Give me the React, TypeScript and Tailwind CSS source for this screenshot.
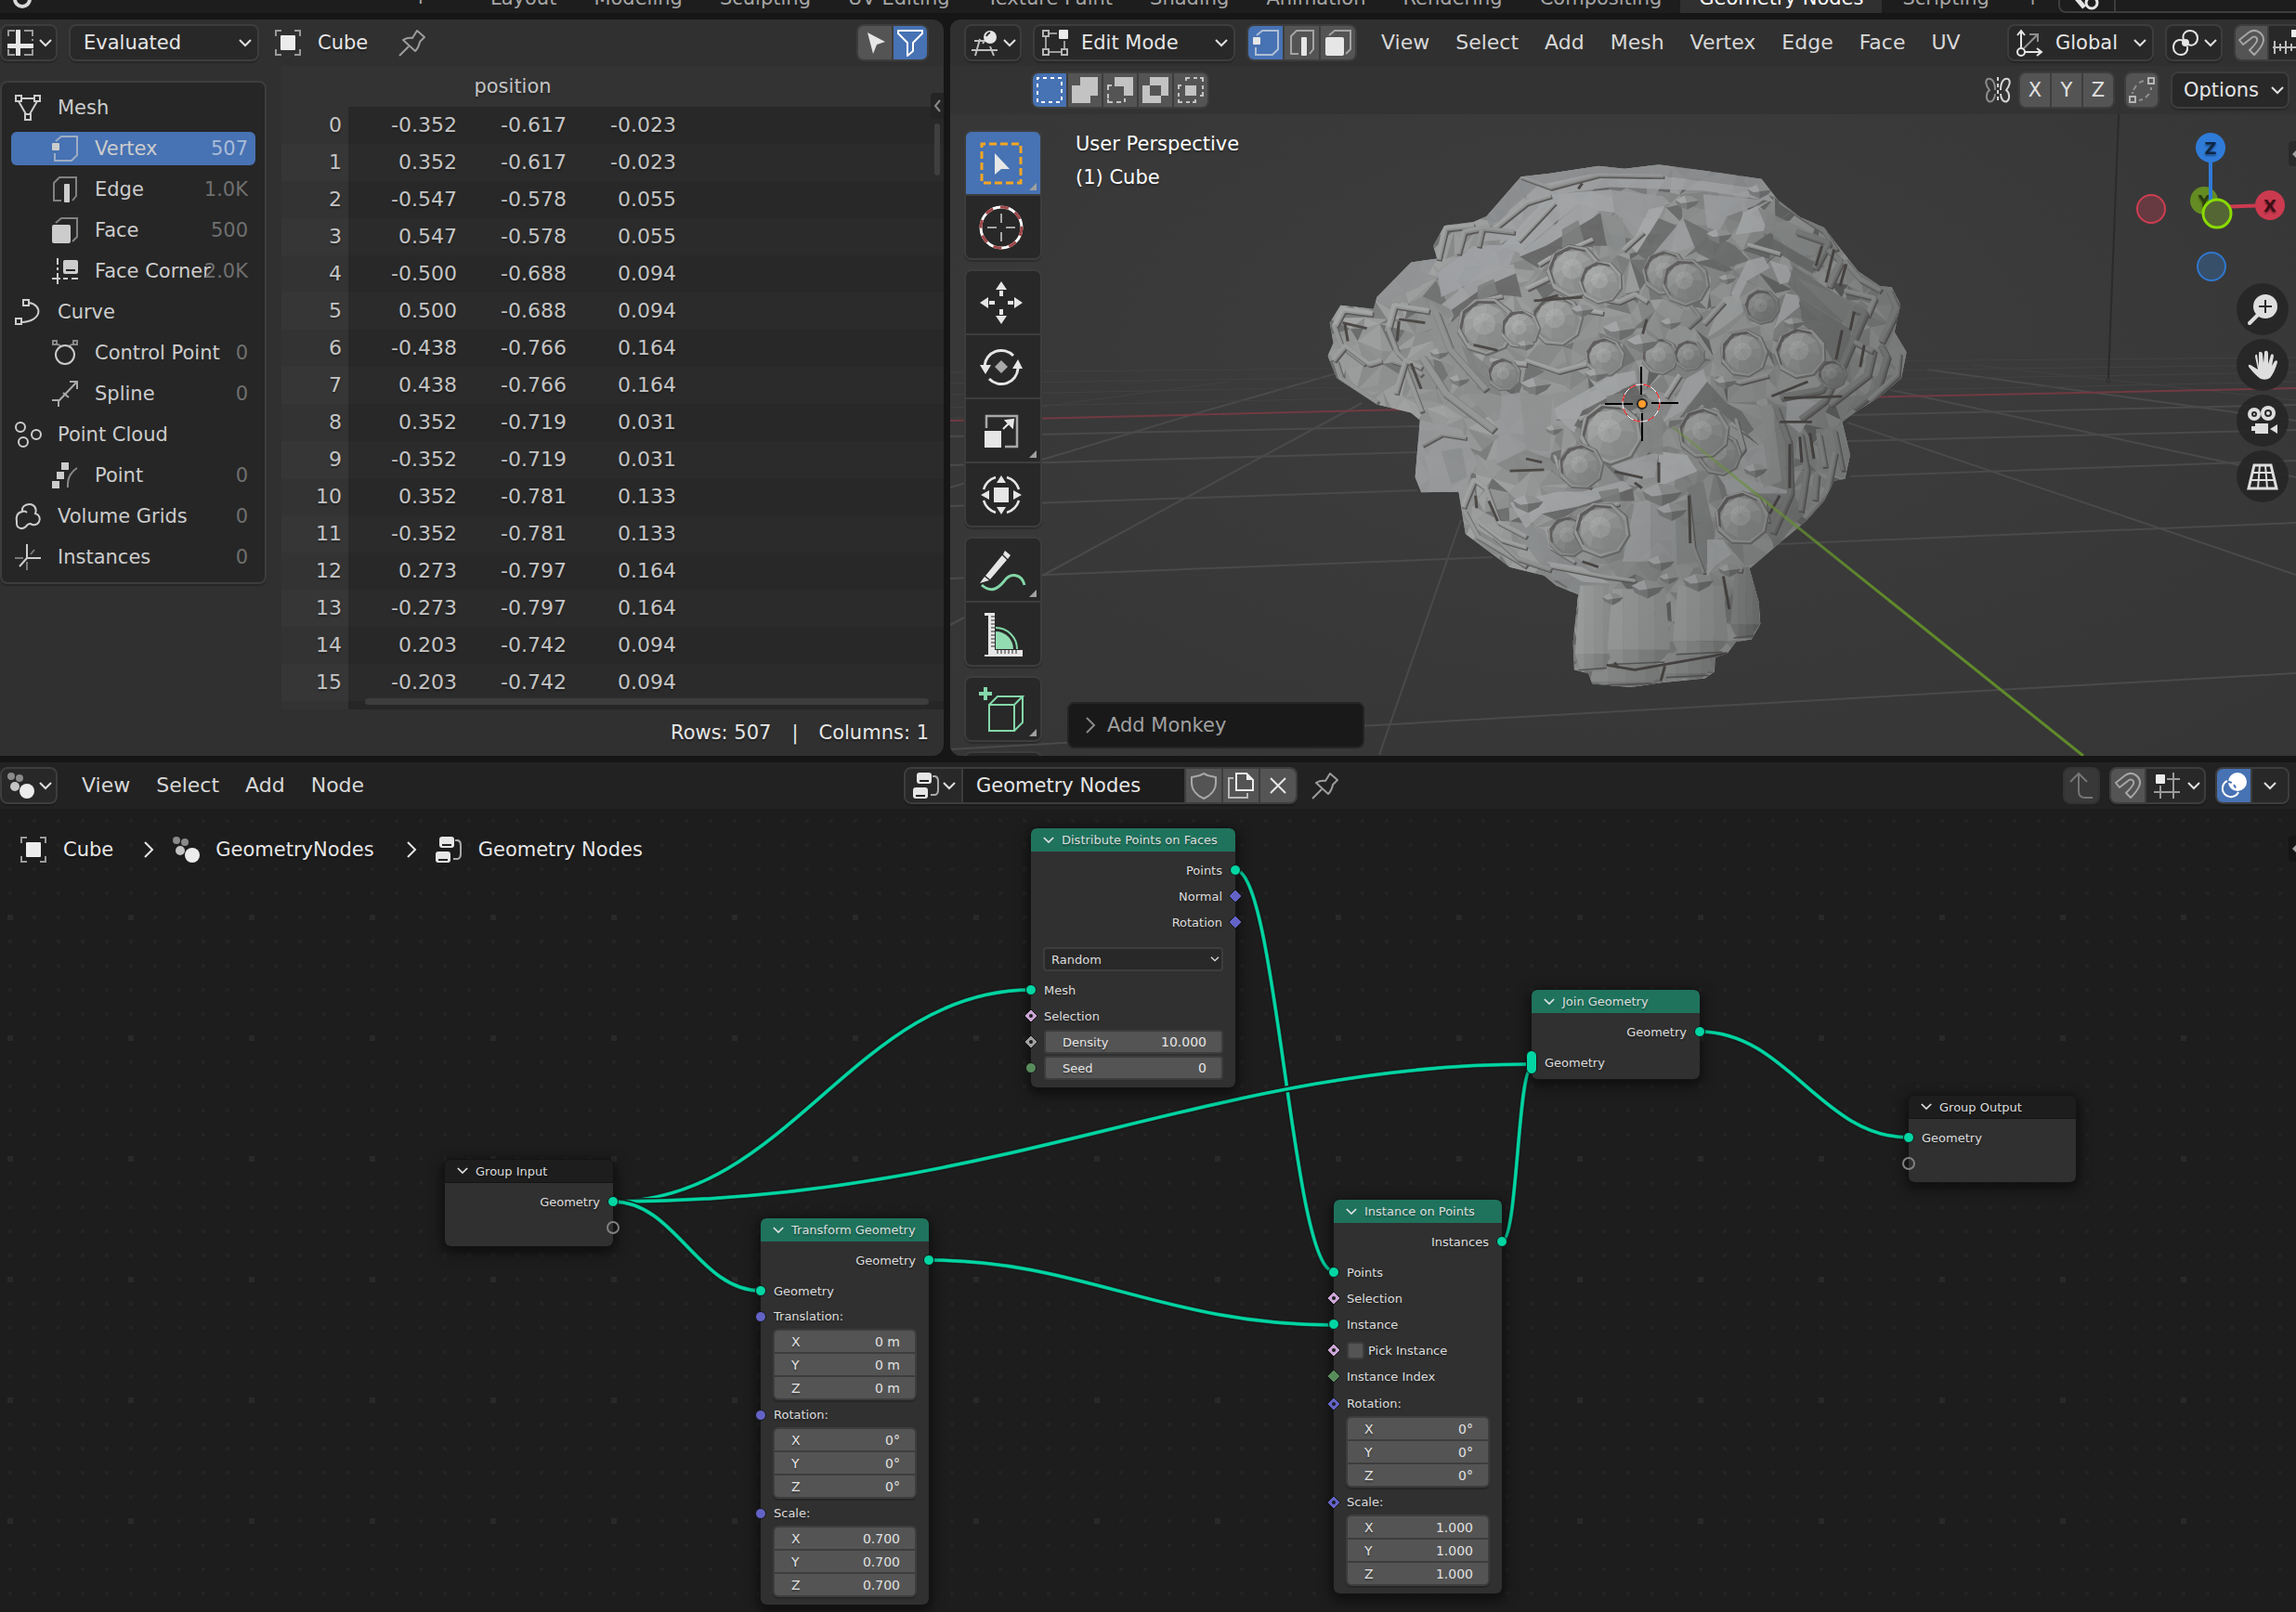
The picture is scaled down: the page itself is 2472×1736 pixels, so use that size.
import type { ReactNode } from "react";

/* ------------------------------------------------------------------ */
/* Icons                                                               */
/* ------------------------------------------------------------------ */

const iconShapes: Record<string, ReactNode> = {
  spreadsheet: (
    <>
      <path d="M1 7V1H8M20 1H27V7M1 21V27H8M20 27H27V21" fill="none" stroke="#9a9a9a" strokeWidth="2" />
      <path d="M9 0H14V15H28V20H14V28H9V20H0V15H9Z" fill="#e6e6e6" />
      <path d="M18 1H22M18 27H22M27 10V12" stroke="#9a9a9a" strokeWidth="2" />
    </>
  ),
  object: (
    <>
      <path d="M1 7V1H7M21 1H27V7M1 21V27H7M21 27H27V21" fill="none" stroke="#9a9a9a" strokeWidth="2" />
      <rect x="6" y="6" width="16" height="16" rx="1" fill="#ececec" />
    </>
  ),
  pin: (
    <path
      d="M0 28L10 18M19 1L27 8L22 13Q21 19 17 23L4 11Q9 8 14 9Z"
      fill="none"
      stroke="#9c9c9c"
      strokeWidth="2"
      strokeLinejoin="round"
    />
  ),
  cursor: <path d="M6 3L25 13L16 16L12 26Z" fill="#e6e6e6" />,
  filter: <path d="M1 1H27V4L17 14V23L11 28V14L1 4Z" fill="none" stroke="#fff" strokeWidth="2" strokeLinejoin="round" />,
  vertex: (
    <>
      <path d="M4 6L10 1H27V21L21 27H3V19" fill="none" stroke="currentColor" strokeOpacity=".65" strokeWidth="2" />
      <rect x="0" y="8" width="8" height="8" rx="1" fill="currentColor" />
    </>
  ),
  edge: (
    <>
      <path d="M10 26H2V7L8 1H26V21L22 26" fill="none" stroke="currentColor" strokeOpacity=".55" strokeWidth="2" />
      <rect x="13" y="8" width="6" height="20" rx="1" fill="currentColor" />
    </>
  ),
  face: (
    <>
      <path d="M4 6L10 1H27V21L22 26" fill="none" stroke="currentColor" strokeOpacity=".55" strokeWidth="2" />
      <rect x="0" y="8" width="20" height="20" rx="2" fill="currentColor" />
    </>
  ),
  corner: (
    <>
      <path d="M6 0V7M6 10V13M6 16V28M0 22H9M12 22H17M21 22H28" stroke="currentColor" strokeWidth="2" />
      <rect x="12" y="2" width="16" height="15" rx="2" fill="currentColor" />
      <path d="M15 13H25" stroke="#262626" strokeWidth="2" />
    </>
  ),
  mesh: (
    <g fill="none" stroke="currentColor" strokeWidth="2">
      <path d="M7 4H21M4 7L12 21M24 7L16 21" />
      <path d="M1 1H7V7H1ZM21 1H27V7H21ZM11 21H17V27H11Z" />
    </g>
  ),
  curve: (
    <g fill="none" stroke="currentColor" strokeWidth="2">
      <path d="M9 1H15V7H9ZM1 21H7V27H1Z" />
      <path d="M15 4C30 6 30 24 7 25" />
    </g>
  ),
  controlPoint: (
    <g fill="none" stroke="currentColor" strokeWidth="2">
      <circle cx="14" cy="16" r="10" />
      <path d="M1 1H5V5H1ZM23 1H27V5H23ZM5 4L10 7M23 4L18 7" strokeOpacity=".6" />
    </g>
  ),
  spline: (
    <g fill="none" stroke="currentColor" strokeWidth="2">
      <path d="M7 22L27 1M19 1H27V9M12 13L18 18M0 21H7V28" strokeOpacity=".8" />
    </g>
  ),
  pointCloud: (
    <g fill="none" stroke="currentColor" strokeWidth="2">
      <circle cx="6" cy="6" r="5" />
      <circle cx="23" cy="14" r="5" />
      <circle cx="9" cy="22" r="5" />
    </g>
  ),
  point: (
    <>
      <path d="M10 0H18V8H10ZM5 10H13V18H5ZM0 20H8V28H0Z" fill="currentColor" />
      <path d="M27 6Q16 13 17 27" fill="none" stroke="currentColor" strokeOpacity=".6" strokeWidth="2" />
    </>
  ),
  volume: (
    <path
      d="M8 9C7 3 12 1 16 1C21 1 24 6 22 11C26 12 28 16 26 20C24 24 19 24 17 22C14 22 13 23 12 25C8 29 1 27 2 20C1 15 2 10 8 9ZM8 9C10 8 12 9 13 10"
      fill="none"
      stroke="currentColor"
      strokeWidth="2"
    />
  ),
  instances: (
    <g stroke="currentColor" strokeWidth="2">
      <path d="M13 0V15H28M13 15L5 24" fill="none" />
      <path d="M13 19V28M9 15H0M17 11L21 6" strokeOpacity=".5" />
    </g>
  ),
  viewport: (
    <>
      <path d="M9 10L4 28M0 22H28M3 12H17M20 18L24 28M14 12L12 15" fill="none" stroke="#bdbdbd" strokeWidth="2" />
      <circle cx="20" cy="8" r="7" fill="#e6e6e6" />
      <path d="M16 7Q17 4 20 3" stroke="#2a2a2a" strokeWidth="2" fill="none" />
    </>
  ),
  editMode: (
    <>
      <path d="M8 4H16M4 8V20M8 24H20M24 12V20" stroke="#9a9a9a" strokeWidth="2" />
      <path d="M1 1H7V7H1ZM1 21H7V27H1ZM21 21H27V27H21Z" fill="none" stroke="#b5b5b5" strokeWidth="2" />
      <rect x="18" y="0" width="10" height="10" rx="1" fill="#ececec" />
    </>
  ),
  selectNew: <rect x="1" y="1" width="26" height="26" fill="none" stroke="#fff" strokeWidth="2" strokeDasharray="4 4" strokeDashoffset="2" />,
  selectExtend: <path d="M9 0H28V20H20V28H0V9H9Z" fill="#c3c3c3" />,
  selectSubtract: (
    <>
      <path d="M8 0H28V20H18V10H8Z" fill="#c3c3c3" />
      <path d="M5 9H1V14M1 18V23M1 24V27H6M10 27H15M19 27V23" fill="none" stroke="#c3c3c3" strokeWidth="2" />
    </>
  ),
  selectInvert: <path d="M8 0H28V20H20V28H0V9H8ZM8 9V20H20V9Z" fill="#c3c3c3" fillRule="evenodd" />,
  selectIntersect: (
    <>
      <rect x="8" y="9" width="12" height="11" fill="#c3c3c3" />
      <path d="M9 4V1H13M17 1H21M24 1H27V5M27 9V13M27 16V20H24M4 9H1V13M1 17V21M1 24V27H5M9 27H13M16 27H19V24" fill="none" stroke="#c3c3c3" strokeWidth="2" />
    </>
  ),
  orientation: (
    <>
      <path d="M5 24V2M1 6L5 1L9 6M5 24H26M22 20L27 24L22 28" fill="none" stroke="#e6e6e6" strokeWidth="2" />
      <path d="M8 20L22 6M14 5H23V13" fill="none" stroke="#8e8e8e" strokeWidth="2" />
      <circle cx="5" cy="24" r="4" fill="#282828" stroke="#e6e6e6" strokeWidth="2" />
    </>
  ),
  pivot: (
    <g fill="none" stroke="#e6e6e6" strokeWidth="2">
      <path d="M12 12C6 9 1 13 1 19C1 24 5 27 9 27C14 27 17 23 16 18" />
      <path d="M12 11C10 5 14 1 19 1C24 1 27 5 27 9C27 15 22 18 17 16" />
      <circle cx="14" cy="14" r="3" fill="#e6e6e6" />
    </g>
  ),
  magnet: (
    <path
      d="M1 11L11 3C20 -3 30 6 26 15C24 20 20 24 17 27L12 22C16 18 19 15 20 12C21 8 17 6 14 9L5 16Z"
      fill="none"
      stroke="#a5a5a5"
      strokeWidth="2"
      strokeLinejoin="round"
    />
  ),
  increment: (
    <>
      <path d="M0 19H28M2 12V26M8 15V23M14 12V26M20 15V23M26 12V26" stroke="#bdbdbd" strokeWidth="2" />
      <rect x="20" y="0" width="8" height="8" fill="#ececec" />
    </>
  ),
  mirror: (
    <g fill="none" strokeWidth="2">
      <path d="M11 14C11 4 7 1 3 2C0 4 1 9 5 14C1 17 1 24 4 26C8 28 11 23 11 18" stroke="#8a8a8a" />
      <path d="M17 14C17 4 21 1 25 2C28 4 27 9 23 14C27 17 27 24 24 26C20 28 17 23 17 18" stroke="#d5d5d5" />
      <path d="M14 0V28" stroke="#d5d5d5" strokeDasharray="4 3" />
    </g>
  ),
  proportional: (
    <g fill="none" stroke="#b5b5b5" strokeWidth="2">
      <path d="M21 1H27V7H21ZM1 21H7V27H1Z" />
      <path d="M16 4L11 6M8 9L5 14M4 16V18M24 11V14M22 18L18 22M15 24L11 25" strokeOpacity=".6" />
    </g>
  ),
  geoNodes: (
    <>
      <circle cx="4" cy="4" r="4" fill="#8a8a8a" />
      <circle cx="13" cy="6" r="4" fill="#8a8a8a" />
      <circle cx="8" cy="15" r="5" fill="#c4c4c4" />
      <circle cx="21" cy="20" r="8" fill="#ececec" />
    </>
  ),
  nodeTree: (
    <>
      <path d="M21 4H24Q27 5 27 9V19Q27 23 24 24H19" fill="none" stroke="#a8a8a8" strokeWidth="2" />
      <rect x="4" y="0" width="16" height="12" rx="3" fill="#e6e6e6" />
      <rect x="0" y="16" width="16" height="12" rx="3" fill="#e6e6e6" />
      <path d="M7 9H17M3 25H13" stroke="#222" strokeWidth="2" />
    </>
  ),
  shield: <path d="M14 1L18 3L27 5V11C27 19 21 25 14 28C7 25 1 19 1 11V5L10 3Z" fill="none" stroke="#a8a8a8" strokeWidth="2" />,
  duplicate: (
    <>
      <path d="M6 6H1V27H21V22" fill="none" stroke="#b9b9b9" strokeWidth="2" />
      <path d="M9 1H20L27 8V19H9Z" fill="none" stroke="#ececec" strokeWidth="2" />
      <path d="M20 0L28 8H20Z" fill="#ececec" />
    </>
  ),
  close: <path d="M6 6L22 22M22 6L6 22" stroke="#e6e6e6" strokeWidth="2" />,
  up: <path d="M2 10L11 1L20 10M11 2V20Q11 27 18 27H26" fill="none" stroke="#757575" strokeWidth="2" />,
  snapGrid: (
    <>
      <path d="M14 7H28M21 0V28M0 21H28M7 14V28" stroke="#9a9a9a" strokeWidth="2" />
      <rect x="2" y="2" width="10" height="10" rx="1" fill="#ececec" />
    </>
  ),
  overlay: (
    <>
      <circle cx="18" cy="10" r="10" fill="#fff" />
      <path d="M7 9A9 9 0 1 0 19 21" fill="none" stroke="#fff" strokeWidth="2" />
      <path d="M8 10Q14 10 17 19" fill="none" stroke="#4772b3" strokeWidth="2" strokeDasharray="4 3" />
    </>
  ),
};

function Icon({ name, className = "" }: { name: string; className?: string }) {
  return (
    <svg viewBox="0 0 28 28" aria-hidden="true" className={`h-7 w-7 shrink-0 overflow-visible ${className}`}>
      {iconShapes[name]}
    </svg>
  );
}

function Chevron({ className = "h-[9px] w-[14px]" }: { className?: string }) {
  return (
    <svg viewBox="0 0 14 9" aria-hidden="true" className={`shrink-0 ${className}`}>
      <path d="M1 1L7 7L13 1" fill="none" stroke="#e0e0e0" strokeWidth="2" />
    </svg>
  );
}

/* ------------------------------------------------------------------ */
/* Controls                                                            */
/* ------------------------------------------------------------------ */

const box = "rounded-lg border-2 border-[#3d3d3d] bg-[#282828] shadow-[0_2px_1px_rgba(0,0,0,0.2)]";

function IconMenu({ icon, label }: { icon: string; label: string }) {
  return (
    <button aria-label={label} className={`flex h-10 w-[62px] shrink-0 items-center justify-between pr-1 pl-1.5 ${box}`}>
      <Icon name={icon} />
      <Chevron />
    </button>
  );
}

function Dropdown({ label, value, icon, className }: { label: string; value: string; icon?: string; className: string }) {
  return (
    <label className={`flex h-10 shrink-0 items-center gap-3.5 pr-1.5 ${icon ? "pl-2" : "pl-3.5"} ${box} ${className}`}>
      <span className="sr-only">{label}</span>
      {icon && <Icon name={icon} />}
      <select className="min-w-0 flex-1 appearance-none bg-transparent text-[#e6e6e6] outline-none">
        <option>{value}</option>
      </select>
      <Chevron />
    </label>
  );
}

function ToggleGroup({ items, active, label, cell }: { items: string[]; active: string; label: string; cell: string }) {
  return (
    <div role="group" aria-label={label} className="flex h-10 shrink-0 gap-0.5 overflow-hidden rounded-lg border-2 border-[#3d3d3d] bg-[#3d3d3d]">
      {items.map((n) => (
        <button
          key={n}
          aria-label={n}
          aria-pressed={n === active}
          className={`grid place-items-center text-[#e6e6e6] ${cell} ${n === active ? "bg-[#4772b3]" : "bg-[#545454]"}`}
        >
          <Icon name={n} />
        </button>
      ))}
    </div>
  );
}

function MenuItems({ items }: { items: string[] }) {
  return (
    <nav className="flex text-[22px] text-[#d8d8d8]">
      {items.map((m) => (
        <button key={m} className="px-3.5">
          {m}
        </button>
      ))}
    </nav>
  );
}

/* ------------------------------------------------------------------ */
/* Top bar                                                             */
/* ------------------------------------------------------------------ */

const workspacesBefore = ["Layout", "Modeling", "Sculpting", "UV Editing", "Texture Paint", "Shading", "Animation", "Rendering", "Compositing"];

function TopBar() {
  return (
    <header className="overflow-hidden bg-[#1d1d1d]">
      <div className="-mt-[18px] flex h-8 items-center text-[#a5a5a5]">
        <svg viewBox="0 0 28 28" aria-hidden="true" className="ml-2.5 h-7 w-7 shrink-0">
          <circle cx="14" cy="15" r="8" fill="none" stroke="#d8d8d8" strokeWidth="4" />
        </svg>
        <nav className="mb-2.5 ml-6 flex w-[446px] shrink-0 gap-[30px]">
          {["File", "Edit", "Render", "Window", "Help"].map((m) => (
            <button key={m}>{m}</button>
          ))}
        </nav>
        <nav className="flex shrink-0 items-center">
          {workspacesBefore.map((w) => (
            <button key={w} className="px-5">
              {w}
            </button>
          ))}
          <button className="h-8 bg-[#303030] px-5 text-white">Geometry Nodes</button>
          <button className="px-[22px]">Scripting</button>
          <button aria-label="Add workspace" className="px-4">
            +
          </button>
        </nav>
        <div className="ml-auto flex h-8 w-[256px] shrink-0 rounded-bl-lg border-b-2 border-l-2 border-[#3d3d3d] bg-[#1d1d1d]">
          <div className="flex w-[60px] items-end justify-center border-r-2 border-[#3d3d3d]">
            <svg viewBox="0 0 30 24" aria-hidden="true" className="h-6 w-[30px]">
              <path d="M2 8L12 20" stroke="#e6e6e6" strokeWidth="5" />
              <circle cx="20" cy="15" r="6" fill="none" stroke="#e6e6e6" strokeWidth="3" />
            </svg>
          </div>
        </div>
      </div>
    </header>
  );
}

/* ------------------------------------------------------------------ */
/* Spreadsheet                                                         */
/* ------------------------------------------------------------------ */

const domains: { icon: string; label: string; count?: string; child?: boolean; active?: boolean }[] = [
  { icon: "mesh", label: "Mesh" },
  { icon: "vertex", label: "Vertex", count: "507", child: true, active: true },
  { icon: "edge", label: "Edge", count: "1.0K", child: true },
  { icon: "face", label: "Face", count: "500", child: true },
  { icon: "corner", label: "Face Corner", count: "2.0K", child: true },
  { icon: "curve", label: "Curve" },
  { icon: "controlPoint", label: "Control Point", count: "0", child: true },
  { icon: "spline", label: "Spline", count: "0", child: true },
  { icon: "pointCloud", label: "Point Cloud" },
  { icon: "point", label: "Point", count: "0", child: true },
  { icon: "volume", label: "Volume Grids", count: "0" },
  { icon: "instances", label: "Instances", count: "0" },
];

const positions = [
  ["-0.352", "-0.617", "-0.023"],
  ["0.352", "-0.617", "-0.023"],
  ["-0.547", "-0.578", "0.055"],
  ["0.547", "-0.578", "0.055"],
  ["-0.500", "-0.688", "0.094"],
  ["0.500", "-0.688", "0.094"],
  ["-0.438", "-0.766", "0.164"],
  ["0.438", "-0.766", "0.164"],
  ["0.352", "-0.719", "0.031"],
  ["-0.352", "-0.719", "0.031"],
  ["0.352", "-0.781", "0.133"],
  ["-0.352", "-0.781", "0.133"],
  ["0.273", "-0.797", "0.164"],
  ["-0.273", "-0.797", "0.164"],
  ["0.203", "-0.742", "0.094"],
  ["-0.203", "-0.742", "0.094"],
];

function Spreadsheet() {
  return (
    <section className="flex min-h-0 min-w-0 flex-col overflow-hidden rounded-r-xl bg-[#303030]">
      <div className="flex h-[50px] shrink-0 items-center pr-4">
        <IconMenu icon="spreadsheet" label="Editor type" />
        <Dropdown label="Object evaluation state" value="Evaluated" className="ml-3 w-[205px]" />
        <Icon name="object" className="ml-[17px]" />
        <span className="ml-[18px] text-[#e6e6e6]">Cube</span>
        <button aria-label="Pin" className="ml-[34px]">
          <Icon name="pin" />
        </button>
        <div className="ml-auto">
          <ToggleGroup items={["cursor", "filter"]} active="filter" label="Row filters" cell="w-9" />
        </div>
      </div>
      <div className="flex min-h-0 flex-1">
        <div className="flex w-[303px] shrink-0 flex-col pt-4 pr-4">
          <ul className="rounded-lg border-2 border-[#3d3d3d] bg-[#262626] py-[5px] shadow-[0_2px_1px_rgba(0,0,0,0.2)]">
            {domains.map((d) => (
              <li key={d.label} className="px-[10px] py-1">
                <button
                  className={`flex h-9 w-full items-center rounded-md pr-2 text-left text-[#cccccc] ${d.child ? "pl-11" : "pl-1"} ${d.active ? "bg-[#4772b3]" : ""}`}
                >
                  <Icon name={d.icon} />
                  <span className="w-0 flex-1 pl-[18px] whitespace-nowrap">{d.label}</span>
                  <span className={d.active ? "text-[#a9bbd8]" : "text-[#6f6f6f]"}>{d.count}</span>
                </button>
              </li>
            ))}
          </ul>
        </div>
        <div className="relative min-w-0 flex-1 overflow-hidden">
          <table className="w-full table-fixed border-collapse text-[22px] text-[#c4c4c4]">
            <colgroup>
              <col className="w-[72px]" />
              <col className="w-[118px]" />
              <col className="w-[118px]" />
              <col className="w-[118px]" />
              <col />
            </colgroup>
            <thead>
              <tr className="h-11 bg-[#333333] text-[21px]">
                <th />
                <th colSpan={3} className="p-0 font-normal">
                  position
                </th>
                <th />
              </tr>
            </thead>
            <tbody>
              {positions.map((p, i) => (
                <tr key={i} className="h-10 bg-[#282828] even:bg-[#2b2b2b]">
                  <th scope="row" className={`p-0 pr-[7px] text-right font-normal ${i % 2 ? "bg-[#363636]" : "bg-[#333333]"}`}>
                    {i}
                  </th>
                  {p.map((v, j) => (
                    <td key={j} className="p-0 pr-px text-right">
                      {v}
                    </td>
                  ))}
                  <td />
                </tr>
              ))}
              <tr className="h-10 bg-[#262626]">
                <th className="bg-[#333333]" />
                <td colSpan={4} />
              </tr>
            </tbody>
          </table>
          <div className="absolute right-4 bottom-[5px] left-[90px] h-[7px] rounded-full bg-[#3d3d3d]" />
          <div className="absolute top-[62px] right-1 h-14 w-1.5 rounded-full bg-[#3f3f3f]" />
          <button aria-label="Show sidebar" className="absolute top-[29px] right-0 grid h-7 w-3.5 place-items-center rounded-l bg-[#242424]">
            <svg viewBox="0 0 8 14" aria-hidden="true" className="h-3.5 w-2">
              <path d="M7 1L2 7L7 13" fill="none" stroke="#8a8a8a" strokeWidth="2" />
            </svg>
          </button>
        </div>
      </div>
      <div className="flex h-[50px] shrink-0 items-center justify-end gap-[22px] pr-4 text-[#e6e6e6]">
        <span>Rows: 507</span>
        <span>|</span>
        <span>Columns: 1</span>
      </div>
    </section>
  );
}

/* ------------------------------------------------------------------ */
/* 3D viewport                                                         */
/* ------------------------------------------------------------------ */

const silhouette =
  "462,210 548,102 620,93 740,73 805,80 890,69 1015,87 1145,108 1185,165 1240,212 1300,240 1335,290 1385,360 1440,400 1468,403 1490,450 1475,525 1505,580 1492,650 1440,700 1375,745 1345,770 1365,860 1352,925 1325,930 1300,985 1255,1040 1200,1090 1115,1170 1138,1260 1142,1320 1120,1362 1082,1368 1060,1400 1030,1412 1028,1450 1005,1468 895,1480 820,1492 725,1483 715,1455 680,1445 677,1370 690,1240 635,1215 605,1188 520,1165 410,1075 393,960 300,962 285,920 297,765 275,745 190,722 90,650 68,590 82,555 73,500 100,452 182,462 190,430 275,335 340,325 330,290 358,235 430,225";

function noise(n: number) {
  const v = Math.sin(n * 127.1 + 31.7) * 43758.5453;
  return v - Math.floor(v);
}

function grey(v: number) {
  const c = Math.max(60, Math.min(176, Math.round(v)));
  return `rgb(${c},${c + 1},${c + 1})`;
}

type Facet = { points: string; fill: string };

function surfaceFacets(): Facet[] {
  const out: Facet[] = [];
  const sx = 40;
  const sy = 44;
  const at = (i: number, j: number): [number, number] => [
    i * sx + (noise(i * 7.3 + j * 19.1) - 0.5) * 50,
    j * sy + (noise(i * 13.7 + j * 5.9) - 0.5) * 50,
  ];
  for (let j = 0; j < 36; j++) {
    for (let i = 0; i < 40; i++) {
      const a = at(i, j);
      const b = at(i + 1, j);
      const c = at(i + 1, j + 1);
      const d = at(i, j + 1);
      const lit = 152 - (i / 40) * 20;
      const k = i * 41 + j * 77;
      const tris: [number, number][][] = (i + j) % 2 ? [[a, b, c], [a, c, d]] : [[a, b, d], [b, c, d]];
      tris.forEach((t, n) => {
        const shade = lit + (noise(k + n * 3.3) - 0.5) * 26 - (noise(k * 1.7 + n) > 0.88 ? 32 : 0);
        out.push({ points: t.map((p) => p.join(",")).join(" "), fill: grey(shade) });
      });
    }
  }
  return out;
}

const facets = surfaceFacets();

/* A faceted eyeball sunk in its socket. */
function Gem({ x, y, r, tone = 158 }: { x: number; y: number; r: number; tone?: number }) {
  const n = 9;
  const ring = (rad: number, off: number, dx = 0, dy = 0) =>
    Array.from({ length: n }, (_, i) => {
      const a = ((i + off) / n) * Math.PI * 2 + x;
      return [Math.round(x + dx + Math.cos(a) * rad), Math.round(y + dy + Math.sin(a) * rad * 1.08)] as [number, number];
    });
  const outer = ring(r, 0);
  const inner = ring(r * 0.52, 0.1, -r * 0.06, -r * 0.1);
  const cx = x - r * 0.1;
  const cy = y - r * 0.18;
  return (
    <g>
      <polygon points={ring(r * 1.34, 0.3, 2, 2).join(" ")} fill="#6b6b6a" />
      <polygon points={ring(r * 1.28, 0.3).join(" ")} fill={grey(tone - 6)} />
      <polygon points={ring(r * 1.12, 0.4, -3, -4).join(" ")} fill="#5f5e5d" />
      <polygon points={ring(r * 1.12, 0.4, 3, 3).join(" ")} fill={grey(tone - 22)} />
      {outer.map((p, i) => {
        const q = outer[(i + 1) % n];
        const s = inner[i];
        const t = inner[(i + 1) % n];
        const a = ((i + 0.5) / n) * Math.PI * 2 + x;
        const l = -Math.cos(a - 0.9) * 13;
        return (
          <g key={i}>
            <polygon points={`${p} ${q} ${t} ${s}`} fill={grey(tone - 8 + l)} />
            <polygon points={`${s} ${t} ${cx},${cy}`} fill={grey(tone + 4 + l * 0.6)} />
          </g>
        );
      })}
    </g>
  );
}

const gems: [number, number, number, number][] = [
  [1145, 455, 34, 138], [905, 362, 44, 148], [955, 388, 46, 146], [678, 358, 52, 160], [745, 388, 42, 162],
  [635, 492, 50, 158], [460, 508, 56, 158], [545, 516, 38, 160], [505, 640, 32, 148], [755, 592, 38, 154],
  [892, 590, 36, 150], [965, 588, 30, 144], [1320, 640, 28, 136], [1100, 582, 46, 154], [1240, 580, 50, 156],
  [770, 800, 60, 160], [1040, 856, 42, 148], [1000, 798, 50, 152], [695, 890, 44, 152], [665, 1080, 40, 146],
  [747, 1062, 54, 158], [1095, 1030, 52, 156],
];

/* Broad planes of the crown, brows, cheeks and chins: [points, fill]. */
const planes: [string, string][] = [
  ["548,102 740,73 890,69 1145,108 1150,135 900,100 720,95 590,125 470,240 462,210", "#8b8d8f"],
  ["590,125 720,95 900,100 1150,135 1175,170 1000,140 770,130 630,150 530,270 440,280", "#9fa1a3"],
  ["620,150 770,137 780,145 780,200 740,195 690,180 640,220 545,310 500,290", "#a3a5a7"],
  ["770,137 900,155 920,175 865,190 830,270 790,210 780,200", "#96989a"],
  ["1000,150 1150,165 1130,180 1060,210 1040,250 1010,240", "#9a9c9e"],
  ["190,430 275,335 340,325 300,400 200,450", "#919395"],
  ["340,365 430,290 540,285 520,340 350,430", "#9fa2a5"],
  ["545,310 690,180 740,195 725,215 610,290 545,320", "#a2a4a6"],
  ["545,320 610,290 725,215 745,200 780,290 700,290 640,300 590,350", "#646464"],
  ["650,245 690,220 705,280 650,300", "#7e7f7f"],
  ["745,200 800,215 810,300 770,330 755,260", "#8c8e8e"],
  ["350,450 470,345 530,340 535,365 460,400 375,465", "#a0a2a3"],
  ["375,465 460,400 535,365 550,430 510,425 430,440 385,490", "#666666"],
  ["440,400 480,380 490,420 440,440", "#7d7e7e"],
  ["820,290 865,190 905,180 890,215 835,310", "#a7a9aa"],
  ["835,310 890,215 935,235 920,300 860,330", "#6a6b6b"],
  ["870,320 935,235 950,210 990,280 960,300", "#9b9d9e"],
  ["950,215 1080,290 1115,330 1060,350 985,310", "#6b6c6c"],
  ["1080,260 1100,200 1135,180 1160,200 1150,250", "#a5a7a8"],
  ["1135,185 1310,275 1250,320 1160,250", "#858787"],
  ["1150,255 1260,325 1300,345 1270,365 1170,300", "#686969"],
  ["1070,420 1110,330 1150,320 1165,350 1110,385 1080,450", "#a3a5a6"],
  ["1165,330 1210,345 1225,385 1190,395", "#a5a7a8"],
  ["1225,345 1370,450 1345,500 1240,430 1210,395", "#717272"],
  ["1230,375 1400,455 1385,545 1350,500", "#7d7f7f"],
  ["1010,540 1050,430 1090,425 1100,470 1040,520", "#9ea0a1"],
  ["1175,520 1205,420 1235,425 1240,455 1190,500", "#a5a7a8"],
  ["1240,430 1370,520 1340,640 1300,560 1245,500", "#6d6e6e"],
  ["320,440 400,520 440,640 560,720 480,770 370,650 330,560", "#8e9090"],
  ["400,560 470,620 500,700 440,680", "#7f8181"],
  ["620,740 780,640 830,630 835,660 700,740 680,800", "#a2a4a5"],
  ["680,780 700,740 830,665 860,720 820,740 740,740 700,790", "#666666"],
  ["760,700 800,690 805,735 765,745", "#7e7f7f"],
  ["900,770 960,650 1000,625 1010,660 950,740", "#a2a4a5"],
  ["940,760 1010,660 1060,720 1150,770 1110,805 1030,730", "#6b6c6c"],
  ["500,700 540,690 625,700 640,780 620,870 560,850 485,885", "#97999a"],
  ["545,690 625,700 620,850 560,845", "#8f9191"],
  ["485,885 560,845 620,870 640,900 520,905", "#858787"],
  ["297,765 400,790 440,880 400,965 300,962 285,920", "#989a9b"],
  ["350,850 400,840 415,920 375,940", "#8b8d8e"],
  ["770,890 890,850 880,920 830,930", "#a0a2a3"],
  ["890,850 960,860 985,905 890,945", "#abadae"],
  ["850,700 900,720 900,860 850,850", "#868888"],
  ["520,990 640,960 700,960 800,930 825,950 690,1000 600,1020 560,1060", "#a3a5a6"],
  ["600,1020 690,1000 825,950 830,985 760,985 690,1005 640,1040", "#656565"],
  ["740,960 790,950 795,985 750,985", "#7d7e7e"],
  ["830,990 870,980 870,1150 800,1150", "#9c9e9f"],
  ["870,980 930,985 935,1150 870,1150", "#929495"],
  ["930,990 960,980 985,1150 935,1160", "#858788"],
  ["960,950 1000,930 1030,1080 1000,1190 985,1150", "#7a7c7c"],
  ["1050,930 1090,920 1220,960 1210,1000 1130,960 1060,970", "#9b9d9e"],
  ["1130,965 1220,965 1250,1020 1180,1110 1150,1060 1160,1000", "#767777"],
  ["1010,1090 1050,1090 1070,1130 1030,1160 1010,1190", "#a2a4a5"],
  ["530,1060 600,1060 690,1150 760,1190 690,1240 610,1180", "#8b8d8e"],
  ["610,1150 700,1165 770,1210 700,1205", "#a5a7a8"],
  ["1180,720 1240,740 1220,960 1160,940", "#7d7f80"],
  ["1095,740 1170,720 1195,930 1150,950 1150,830", "#8f9191"],
  ["1090,850 1150,830 1160,900 1130,920 1095,900", "#999b9c"],
  ["1210,690 1290,720 1240,800 1205,770", "#9b9d9e"],
  ["1280,790 1350,780 1362,860 1350,925 1290,900", "#858788"],
];

/* Overlapping shell edges: a lit strip with a dark crease beneath it. */
const bands: [string, number, number][] = [
  ["M545 100L620 130L740 95L900 98", 8, 150], ["M480 240L560 170L620 150", 12, 160], ["M540 275L630 170", 8, 164],
  ["M340 325L358 240L430 232", 14, 158], ["M390 310L405 250L470 235", 12, 154], ["M440 290L450 240L530 250", 12, 150],
  ["M85 600L100 650L190 715", 14, 146], ["M82 510L105 462L178 472", 14, 164], ["M82 505L100 560L160 610", 12, 150],
  ["M215 520L232 450L318 465", 14, 162], ["M215 510L240 580L300 640", 12, 150], ["M80 600L110 560L170 610L200 600", 12, 156],
  ["M225 600L255 610L300 740", 12, 152], ["M235 690L260 600L300 620", 12, 156], ["M300 590L360 690L480 790", 20, 148],
  ["M335 470L370 570L460 680", 18, 144], ["M402 1000L430 925L462 950", 12, 160], ["M405 1010L440 1080L560 1160", 12, 150],
  ["M460 950L490 1040L560 1080", 12, 156], ["M480 1080L540 1140L620 1170", 12, 146], ["M440 1040L500 1090L560 1110", 10, 158],
  ["M1190 170L1300 250L1330 300", 12, 128], ["M1230 250L1310 280L1275 350", 16, 124], ["M1310 300L1340 330L1310 400", 16, 132],
  ["M1350 330L1390 380L1440 410", 14, 138], ["M1350 410L1425 430L1405 480", 12, 146], ["M1460 410L1480 460L1440 550", 16, 132],
  ["M1370 460L1400 470L1345 610L1290 680L1190 700", 18, 122], ["M1420 570L1405 640L1310 720", 18, 130], ["M1375 550L1420 575", 14, 138],
  ["M1440 560L1455 590L1430 680L1370 730", 16, 126], ["M1485 580L1480 640L1410 710", 12, 142], ["M1340 620L1300 710L1240 760", 14, 124],
  ["M1180 730L1210 820L1215 960L1170 1070", 16, 122], ["M1240 800L1255 900L1240 1010", 14, 130], ["M1285 800L1300 890", 14, 138],
  ["M1325 790L1345 900", 10, 130], ["M1325 850L1305 960L1250 1030", 14, 140], ["M1280 910L1275 980", 14, 134],
  ["M590 340L620 320L725 270", 8, 166], ["M560 405L660 352", 10, 166], ["M400 470L440 440L500 425", 8, 160],
  ["M1110 285L1190 310", 10, 160], ["M690 760L760 735L830 745", 10, 160], ["M1000 725L950 770L945 830", 8, 158],
  ["M690 1030L720 1010L790 990", 8, 160], ["M630 860L650 920L720 945", 8, 160], ["M610 1060L620 1110L680 1150", 8, 156],
  ["M1045 1000L1080 970L1150 985L1160 1040", 8, 158], ["M1080 760L1100 840L1060 900", 8, 148], ["M960 960L975 1110L1000 1180", 8, 140],
  ["M300 830L350 800L410 810", 10, 150], ["M560 600L640 630L710 610", 10, 160], ["M470 600L560 610", 12, 164],
  ["M800 300L850 250", 8, 160], ["M690 460L750 470", 12, 166], ["M740 430L790 440L830 420L860 440", 12, 156],
  ["M1030 640L1090 660L1160 640", 10, 150], ["M1000 500L1050 440", 10, 152], ["M905 700L940 640", 10, 164],
  ["M620 1160L760 1190L830 1200", 8, 160], ["M1040 1160L1095 1170", 14, 152], ["M960 440L990 480L960 510", 10, 136],
];

const darkGaps =
  "M1295 290L1280 345M1325 300L1305 390M1355 340L1340 400M1345 520L1330 600M1375 470L1365 520M1400 560L1390 620M1345 700L1200 705M1270 770L1190 770M1240 810L1245 880M1215 830L1215 950M1190 970L1165 1020M1265 800L1275 870M105 500L165 515M245 490L310 500M110 500L118 550M245 495L240 550M275 610L300 680M435 970L438 1005M468 985L490 1040M520 903L605 900M560 870L600 880M490 575L430 560M780 905L850 922M830 935L848 950M1050 1190L1065 1280M740 1165L700 1150M760 1432L830 1445L1060 1400M780 1425L790 1440M905 1435L895 1475M890 880L890 935M965 970L968 1100M690 135L700 120M700 430L580 440M860 490L850 530M1170 700L1260 660M590 440L640 425";

/* Protruding noses: [x, y, half width]. */
const noses: [number, number, number][] = [
  [793, 518, 42], [850, 553, 40], [585, 670, 38], [898, 965, 50], [922, 1012, 38], [862, 1222, 40], [735, 640, 30],
  [988, 1205, 38], [915, 1195, 24], [895, 1152, 34], [775, 1250, 26], [1065, 1172, 28], [395, 655, 26], [345, 582, 24],
  [565, 990, 38], [1055, 660, 28], [1130, 900, 30], [630, 790, 22], [560, 560, 22], [1060, 380, 22], [1140, 140, 30],
  [960, 170, 30], [1040, 262, 32], [700, 465, 28], [1225, 500, 26], [920, 500, 26],
];

function Nose({ x, y, w }: { x: number; y: number; w: number }) {
  const h = w * 0.8;
  return (
    <g>
      <polygon points={`${x - w},${y - h * 0.2} ${x - w * 0.2},${y - h * 0.7} ${x},${y + h * 0.1} ${x - w * 0.5},${y + h * 0.2}`} fill="#a2a4a5" />
      <polygon points={`${x - w * 0.2},${y - h * 0.7} ${x + w * 0.4},${y - h * 0.6} ${x + w},${y - h * 0.1} ${x},${y + h * 0.1}`} fill="#8f9191" />
      <polygon points={`${x - w},${y - h * 0.2} ${x - w * 0.5},${y + h * 0.2} ${x},${y + h * 0.1} ${x + w},${y - h * 0.1} ${x + w * 0.7},${y + h * 0.4} ${x},${y + h * 0.9} ${x - w * 0.8},${y + h * 0.4}`} fill="#7a7c7c" />
      <polygon points={`${x},${y + h * 0.1} ${x + w},${y - h * 0.1} ${x + w * 0.7},${y + h * 0.4} ${x},${y + h * 0.9}`} fill="#6b6c6c" />
    </g>
  );
}

/* Teeth and chin slabs: [left, top, right, bottom, tone]. */
const slabs: [number, number, number, number, number][] = [
  [1068, 1165, 1142, 1360, 128], [900, 1400, 1028, 1468, 138], [718, 1430, 900, 1490, 140],
  [925, 1215, 1062, 1405, 150], [682, 1215, 775, 1448, 154], [762, 1225, 918, 1432, 152],
];

function Slab({ b }: { b: [number, number, number, number, number] }) {
  const [l, t, r, m, tone] = b;
  const w = (r - l) / 4;
  const h = m - t;
  return (
    <g>
      {[0, 1, 2, 3].map((i) => (
        <g key={i}>
          <polygon
            points={`${l + w * i + (i === 0 ? 12 : 0)},${t} ${l + w * (i + 1) - (i === 3 ? 12 : 0)},${t} ${l + w * (i + 1)},${m - h * 0.2} ${l + w * i},${m - h * 0.2}`}
            fill={grey(tone + 7 - i * 5)}
          />
          <polygon
            points={`${l + w * i},${m - h * 0.2} ${l + w * (i + 1)},${m - h * 0.2} ${l + w * (i + 1) - (i === 3 ? 14 : 0)},${m - (i === 3 ? 20 : 0)} ${l + w * i + (i === 0 ? 10 : 0)},${m - (i === 0 ? 14 : 0)}`}
            fill={grey(tone - 2 - i * 8)}
          />
        </g>
      ))}
      <path d={`M${l + 8} ${m - 2}L${r - 14} ${m - 8}`} stroke="#5c5b5a" strokeWidth="4" />
    </g>
  );
}

const floorLines = [
  "M0 480L503 466", "M0 449L507 438", "M0 524L503 507", "M0 602L584 579", "M0 786L757 743L1449 704",
  "M0 652L99 599L254 515L443 413", "M0 504L99 474L259 426L427 378", "M462 792L550 539",
  "M969 492L1449 475", "M966 454L1449 442", "M970 426L1449 415", "M867 566L1449 542",
  "M966 434L1273 538L1449 598", "M1013 399L1449 493", "M1052 377L1449 432",
];
const farLines = ["M0 418L430 408", "M0 404L430 396", "M0 392L420 386", "M0 380L420 376", "M0 430L300 390", "M980 400L1449 390", "M980 388L1449 380", "M980 378L1449 372", "M980 368L1449 364", "M1100 372L1449 410"];

function Scene() {
  return (
    <svg viewBox="0 0 1449 793" preserveAspectRatio="xMidYMid slice" className="absolute inset-0 h-full w-full" role="img" aria-label="Monkey head mesh">
      <defs>
        <clipPath id="head">
          <polygon points={silhouette} />
        </clipPath>
        <radialGradient id="backdrop" cx=".5" cy=".45" r=".75">
          <stop offset="0" stopColor="#3e3e3e" />
          <stop offset="1" stopColor="#353535" />
        </radialGradient>
        <linearGradient id="shade" x1="0" x2="1" y1="0" y2=".5">
          <stop offset=".55" stopColor="#000" stopOpacity="0" />
          <stop offset="1" stopColor="#000" stopOpacity=".18" />
        </linearGradient>
        <linearGradient id="yAxis" x1="0" x2=".5" y1="0" y2=".5">
          <stop offset="0" stopColor="#6d9040" stopOpacity=".4" />
          <stop offset="1" stopColor="#5f8a2a" />
        </linearGradient>
      </defs>
      <rect width="1449" height="793" fill="url(#backdrop)" />
      <g fill="none" stroke="#4a4a4a" strokeWidth="2">
        {floorLines.map((d) => (
          <path key={d} d={d} />
        ))}
      </g>
      <g fill="none" stroke="#424242" strokeWidth="1">
        {farLines.map((d) => (
          <path key={d} d={d} />
        ))}
      </g>
      <path d="M0 432L491 420M977 407L1449 397" stroke="#713a42" strokeWidth="2" />
      <path d="M1260 52L1247 386" stroke="#2b2b2b" strokeWidth="2" />
      <circle cx="1247" cy="389" r="2" fill="none" stroke="#2b2b2b" />
      <g transform="translate(377 129) scale(0.4337 0.3954)">
        <g clipPath="url(#head)">
          <rect width="1568" height="1568" fill="#8f9192" />
          {facets.map((f, i) => (
            <polygon key={i} points={f.points} fill={f.fill} />
          ))}
          {planes.map(([points, fill]) => (
            <polygon key={points} points={points} fill={fill} fillOpacity=".88" />
          ))}
          {slabs.map((b) => (
            <Slab key={b.join()} b={b} />
          ))}
          {bands.map(([d, width, tone]) => (
            <g key={d} fill="none" strokeLinejoin="bevel">
              <path d={d} stroke="#5a5857" strokeWidth={width} transform="translate(5 7)" />
              <path d={d} stroke={grey(tone - 16)} strokeWidth={width} transform="translate(2 3)" />
              <path d={d} stroke={grey(tone)} strokeWidth={width * 0.7} />
            </g>
          ))}
          {gems.map(([x, y, r, tone]) => (
            <Gem key={`${x}-${y}`} x={x} y={y} r={r} tone={tone} />
          ))}
          {noses.map(([x, y, w]) => (
            <Nose key={`${x}-${y}`} x={x} y={y} w={w} />
          ))}
          <path d={darkGaps} fill="none" stroke="#4b4846" strokeWidth="7" strokeLinejoin="bevel" />
          <rect width="1568" height="1568" fill="url(#shade)" />
        </g>
      </g>
      <path d="M778 439L1220 793" stroke="url(#yAxis)" strokeWidth="3" />
      <g stroke="#000" strokeWidth="2">
        <path d="M705 414H735M755 413H784M744 374V404M745 424V454" />
      </g>
      <circle cx="744" cy="413" r="20" fill="none" stroke="#fff" strokeWidth="1" />
      <circle cx="744" cy="413" r="20" fill="none" stroke="#f00" strokeWidth="1" strokeDasharray="8 8" />
      <circle cx="745" cy="414" r="5" fill="#ff9d2e" stroke="#2b2b2b" strokeWidth="2" />
    </svg>
  );
}

const toolShapes: Record<string, ReactNode> = {
  select: (
    <>
      <rect x="3" y="3" width="42" height="42" fill="none" stroke="#f5a623" strokeWidth="3" strokeDasharray="8 4" strokeDashoffset="4" />
      <path d="M17 13L33 30L24 30L17 36Z" fill="#e6e6e6" />
    </>
  ),
  cursor3d: (
    <>
      <circle cx="24" cy="24" r="22" fill="none" stroke="#fff" strokeWidth="3" />
      <circle cx="24" cy="24" r="22" fill="none" stroke="#a04648" strokeWidth="3" strokeDasharray="9 8" />
      <path d="M24 9V19M24 29V39M9 24H19M29 24H39" stroke="#d0d0d0" strokeWidth="1.5" />
    </>
  ),
  move: (
    <>
      <path d="M24 1L30 10H18ZM24 47L30 38H18ZM1 24L10 18V30ZM47 24L38 18V30Z" fill="#e6e6e6" />
      <path d="M24 11V17M24 31V37M11 24H17M31 24H37" stroke="#e6e6e6" strokeWidth="4" />
    </>
  ),
  rotate: (
    <>
      <path d="M6 23A18 18 0 0 1 37 12M42 26A18 18 0 0 1 11 37" fill="none" stroke="#e6e6e6" strokeWidth="3" />
      <path d="M1 22H13L7 32ZM36 26H47L42 16Z" fill="#e6e6e6" />
      <path d="M24 17L31 24L24 31L17 24Z" fill="#a8a8a8" />
    </>
  ),
  scale: (
    <>
      <path d="M8 21V8H41V41H28" fill="none" stroke="#a8a8a8" strokeWidth="2.5" />
      <rect x="6" y="24" width="18" height="18" fill="#e6e6e6" />
      <path d="M26 22L32 16L29 13L37 12L36 20L33 17" fill="#e6e6e6" stroke="#e6e6e6" strokeWidth="2" />
    </>
  ),
  transform: (
    <>
      <path d="M5 18A20 20 0 0 1 18 5M30 5A20 20 0 0 1 43 18M43 30A20 20 0 0 1 30 43M18 43A20 20 0 0 1 5 30" fill="none" stroke="#e6e6e6" strokeWidth="2.5" />
      <rect x="16" y="16" width="16" height="16" fill="#e6e6e6" />
      <path d="M24 3L29 11H19ZM24 45L29 37H19ZM2 24L11 19V29ZM46 24L37 19V29Z" fill="#e6e6e6" />
    </>
  ),
  annotate: (
    <>
      <path d="M28 3L34 8L31 12L26 7ZM25 8L30 13L12 34L7 30ZM6 31L11 35L1 38Z" fill="#e6e6e6" />
      <path d="M3 40C14 50 22 42 27 36C34 26 46 28 49 40" fill="none" stroke="#84d7a8" strokeWidth="3" />
    </>
  ),
  measure: (
    <>
      <path d="M18 17A23 23 0 0 1 41 40" fill="none" stroke="#84d7a8" strokeWidth="2" />
      <path d="M18 21A19 19 0 0 1 37 40H18Z" fill="#93dcb2" />
      <path d="M6 1H17V41H47V48H6V46H10V4H6Z" fill="#e6e6e6" />
      <path d="M13 5H17M13 9H17M13 13H17M13 17H17M13 21H17M13 25H17M13 29H17M13 33H17M13 37H17M20 41V45M24 41V45M28 41V45M32 41V45M36 41V45M40 41V45" stroke="#282828" strokeWidth="1" />
    </>
  ),
  addCube: (
    <>
      <path d="M7 0V14M0 7H14" stroke="#84d7a8" strokeWidth="4" />
      <path d="M11 19H38V47H11ZM11 19L20 10H47L38 19M47 10V38L38 47" fill="none" stroke="#84d7a8" strokeWidth="2" />
    </>
  ),
};

function ToolGroup({ tools, corners }: { tools: string[]; corners: string[] }) {
  return (
    <div className="flex shrink-0 flex-col gap-0.5 overflow-hidden rounded-lg border-2 border-[#3d3d3d] bg-[#3d3d3d] shadow-[0_2px_1px_rgba(0,0,0,0.2)]">
      {tools.map((t) => (
        <button
          key={t}
          aria-label={t}
          className={`relative grid h-[67px] w-20 shrink-0 place-items-center pr-1 ${t === "select" ? "bg-[#4772b3]" : "bg-[#282828]"}`}
        >
          <svg viewBox="0 0 48 48" aria-hidden="true" className="h-12 w-12 overflow-visible">
            {toolShapes[t]}
          </svg>
          {corners.includes(t) && (
            <svg viewBox="0 0 8 8" aria-hidden="true" className="absolute right-1 bottom-1 h-2 w-2">
              <path d="M8 0V8H0Z" fill="#a0a0a0" />
            </svg>
          )}
        </button>
      ))}
    </div>
  );
}

function Gizmo() {
  return (
    <svg viewBox="0 0 168 166" role="img" aria-label="View orientation" className="h-[166px] w-[168px] overflow-visible text-[18px] font-bold">
      <circle cx="20" cy="86" r="15" fill="#673a42" stroke="#d03d52" strokeWidth="2" />
      <circle cx="85" cy="148" r="15" fill="#384f69" stroke="#2f78cf" strokeWidth="2" />
      <circle cx="77" cy="77" r="15" fill="#648c22" />
      <text x="77" y="84" textAnchor="middle" fill="#2b3d10">
        Y
      </text>
      <path d="M84 20V84" stroke="#2f7bd8" strokeWidth="4" />
      <path d="M90 84L148 82" stroke="#cc3a50" strokeWidth="4" />
      <circle cx="91" cy="91" r="15" fill="#546634" stroke="#8adb00" strokeWidth="3" />
      <circle cx="84" cy="20" r="16" fill="#2f7bd8" />
      <text x="84" y="27" textAnchor="middle" fill="#0e2744">
        Z
      </text>
      <circle cx="148" cy="82" r="16" fill="#cc3a50" />
      <text x="148" y="89" textAnchor="middle" fill="#3d0f17">
        X
      </text>
    </svg>
  );
}

const navShapes: [string, ReactNode][] = [
  [
    "Zoom",
    <>
      <path d="M2 31L13 20" stroke="#dedede" strokeWidth="4" strokeLinecap="round" />
      <circle cx="19" cy="13" r="13" fill="#dedede" />
      <path d="M19 6V20M12 13H26" stroke="#2a2a2a" strokeWidth="2" />
    </>,
  ],
  [
    "Pan",
    <path
      d="M12 18V4Q12 1 14 2Q16 2 16 5L17 14L18 2Q19 0 21 1Q22 2 22 4V15L25 5Q27 3 28 6L26 17L29 12Q32 10 32 13Q29 24 24 30Q20 33 14 31Q9 28 1 18Q0 15 3 16L11 21L8 7Q8 4 10 5Z"
      fill="#dedede"
      key="hand"
    />,
  ],
  [
    "Camera view",
    <>
      <circle cx="7" cy="9" r="7" fill="#dedede" />
      <circle cx="22" cy="8" r="8" fill="#dedede" />
      <circle cx="7" cy="9" r="2" fill="#dedede" stroke="#2a2a2a" strokeWidth="2" />
      <circle cx="22" cy="8" r="3" fill="#dedede" stroke="#2a2a2a" strokeWidth="2" />
      <path d="M8 19H22V30H8V27H4V22H8ZM24 25L32 20V30Z" fill="#dedede" />
    </>,
  ],
  [
    "Perspective",
    <>
      <path d="M7 4H25L31 29H1Z" fill="none" stroke="#dedede" strokeWidth="3" />
      <path d="M5 12H27M3 20H29M13 4L11 29M19 4L21 29" stroke="#dedede" strokeWidth="2" />
    </>,
  ],
];

function Viewport() {
  return (
    <section className="relative flex min-h-0 min-w-0 flex-col overflow-hidden rounded-l-xl bg-[#393939]">
      <Scene />
      <div className="relative flex h-[50px] shrink-0 items-center gap-3 bg-[#303030] pl-[15px]">
        <IconMenu icon="viewport" label="Editor type" />
        <Dropdown label="Mode" value="Edit Mode" icon="editMode" className="w-[218px]" />
        <ToggleGroup items={["vertex", "edge", "face"]} active="vertex" label="Mesh select mode" cell="w-[37px]" />
        <MenuItems items={["View", "Select", "Add", "Mesh", "Vertex", "Edge", "Face", "UV"]} />
        <Dropdown label="Transform orientation" value="Global" icon="orientation" className="ml-auto w-[158px]" />
        <IconMenu icon="pivot" label="Pivot point" />
        <div className="flex h-10 w-[67px] shrink-0 overflow-hidden rounded-l-lg border-2 border-r-0 border-[#3d3d3d] bg-[#282828]">
          <button aria-label="Snap" className="grid w-9 shrink-0 place-items-center border-r-2 border-[#3d3d3d] bg-[#545454]">
            <Icon name="magnet" />
          </button>
          <button aria-label="Snap to" className="flex items-center pl-1">
            <Icon name="increment" />
          </button>
        </div>
      </div>
      <div className="relative flex h-[52px] shrink-0 items-center bg-[#333333]/95 pr-[7px] pl-[87px]">
        <ToggleGroup
          items={["selectNew", "selectExtend", "selectSubtract", "selectInvert", "selectIntersect"]}
          active="selectNew"
          label="Selection mode"
          cell="w-9"
        />
        <Icon name="mirror" className="mr-2 ml-auto" />
        <div role="group" aria-label="Mirror axis" className="flex h-10 gap-0.5 overflow-hidden rounded-lg border-2 border-[#3d3d3d] bg-[#3d3d3d] text-[#e0e0e0]">
          {["X", "Y", "Z"].map((a) => (
            <button key={a} className="w-8 bg-[#545454]">
              {a}
            </button>
          ))}
        </div>
        <button aria-label="Auto merge" className="mr-3 ml-2.5 grid h-10 w-[38px] place-items-center rounded-lg border-2 border-[#3d3d3d] bg-[#545454]">
          <Icon name="proportional" />
        </button>
        <button className={`flex h-10 w-32 items-center justify-between pr-1 pl-3 text-[#e6e6e6] ${box}`}>
          Options
          <Chevron />
        </button>
      </div>
      <div className="relative flex min-h-0 flex-1 justify-between pr-2 pl-[15px]">
        <div className="flex shrink-0 flex-col gap-2.5 pt-[17px]">
          <ToolGroup tools={["select", "cursor3d"]} corners={["select"]} />
          <ToolGroup tools={["move", "rotate", "scale", "transform"]} corners={["scale"]} />
          <ToolGroup tools={["annotate", "measure"]} corners={["annotate"]} />
          <ToolGroup tools={["addCube"]} corners={["addCube"]} />
          <div className="h-10 shrink-0 rounded-lg border-2 border-[#3d3d3d] bg-[#282828]" />
        </div>
        <div className="flex flex-1 flex-col pt-3.5 pl-9 leading-9 text-white">
          <p>User Perspective</p>
          <p>(1) Cube</p>
        </div>
        <div className="flex flex-col items-end pt-4">
          <Gizmo />
          <div className="flex flex-col gap-1">
            {navShapes.map(([label, shape]) => (
              <button key={label} aria-label={label} className="grid h-14 w-14 place-items-center rounded-full bg-[#262626]/90">
                <svg viewBox="0 0 32 32" aria-hidden="true" className="h-8 w-8 overflow-visible">
                  {shape}
                </svg>
              </button>
            ))}
          </div>
        </div>
      </div>
      <button className="absolute bottom-2 left-[126px] flex h-[50px] w-[320px] items-center gap-3 rounded-lg border-2 border-[#242424] bg-[#191919] pl-[18px] text-[#a0a0a0]">
        <svg viewBox="0 0 11 18" aria-hidden="true" className="h-[18px] w-[11px]">
          <path d="M1 1L9 9L1 17" fill="none" stroke="#8a8a8a" strokeWidth="2" />
        </svg>
        Add Monkey
      </button>
      <button aria-label="Show sidebar" className="absolute top-[131px] right-0 grid h-[27px] w-2 place-items-end rounded-l bg-[#2a2a2a]">
        <svg viewBox="0 0 4 8" aria-hidden="true" className="my-auto h-2 w-1">
          <path d="M4 0V8L0 4Z" fill="#a0a0a0" />
        </svg>
      </button>
    </section>
  );
}

/* ------------------------------------------------------------------ */
/* Node editor                                                         */
/* ------------------------------------------------------------------ */

type SocketKind = "geometry" | "multi" | "vector" | "int" | "vectorField" | "vectorFieldOpen" | "boolOpen" | "floatOpen" | "intField" | "virtual";

const diamonds: Record<string, [string, boolean]> = {
  vectorField: ["#6363c7", false],
  vectorFieldOpen: ["#6363c7", true],
  boolOpen: ["#cca6d6", true],
  floatOpen: ["#a1a1a1", true],
  intField: ["#598c5c", false],
};

function Socket({ kind, side }: { kind: SocketKind; side: "in" | "out" }) {
  const edge = side === "in" ? "left-0 -translate-x-1/2" : "right-0 translate-x-1/2";
  const spot = `absolute top-1/2 -translate-y-1/2 ${edge}`;
  if (kind in diamonds) {
    const [color, open] = diamonds[kind];
    return (
      <svg viewBox="0 0 14 14" aria-hidden="true" className={`h-3.5 w-3.5 overflow-visible ${spot}`}>
        <path d="M7 0L14 7L7 14L0 7Z" fill={color} stroke="#161616" strokeWidth="1" />
        {open && <circle cx="7" cy="7" r="2" fill="#1d1d1d" />}
      </svg>
    );
  }
  if (kind === "multi") return <span className={`h-[26px] w-3 rounded-full border border-[#161616] bg-[#00d6a3] ${spot}`} />;
  if (kind === "virtual") return <span className={`h-3.5 w-3.5 rounded-full border-2 border-[#808080] ${spot}`} />;
  const fill = kind === "geometry" ? "bg-[#00d6a3]" : kind === "int" ? "bg-[#598c5c]" : "bg-[#6363c7]";
  return <span className={`h-3 w-3 rounded-full border border-[#161616] ${fill} ${spot}`} />;
}

function Output({ label, kind = "geometry" }: { label?: string; kind?: SocketKind }) {
  return (
    <div className="relative flex h-7 items-center justify-end pr-3.5">
      {label}
      <Socket kind={kind} side="out" />
    </div>
  );
}

function Input({ label, kind = "geometry", children }: { label?: string; kind?: SocketKind; children?: ReactNode }) {
  return (
    <div className="relative flex h-7 items-center pr-[13px] pl-3.5">
      <Socket kind={kind} side="in" />
      {children ?? label}
    </div>
  );
}

function NumberField({ label, value }: { label: string; value: string }) {
  return (
    <label className="flex h-[26px] w-full items-center justify-between rounded border-2 border-[#3d3d3d] bg-[#545454] pr-4 pl-[18px] text-[#e6e6e6]">
      {label}
      <input defaultValue={value} className="w-16 min-w-0 bg-transparent text-right text-[14px] outline-none" />
    </label>
  );
}

function VectorField({ label, kind, values }: { label: string; kind: SocketKind; values: string[] }) {
  return (
    <fieldset>
      <div className="relative flex h-[27px] items-center pl-3.5">
        <Socket kind={kind} side="in" />
        <legend>{label}:</legend>
      </div>
      <div className="mr-[13px] mb-0.5 ml-[13px] flex h-[77px] flex-col gap-0.5 overflow-hidden rounded-md border-2 border-[#3d3d3d] bg-[#3d3d3d] shadow-[0_2px_1px_rgba(0,0,0,0.2)]">
        {["X", "Y", "Z"].map((axis, i) => (
          <label key={axis} className="flex min-h-0 flex-1 items-center justify-between bg-[#545454] pr-4 pl-[18px] text-[14px] text-[#e0e0e0]">
            {axis}
            <input defaultValue={values[i]} className="w-16 min-w-0 bg-transparent text-right outline-none" />
          </label>
        ))}
      </div>
    </fieldset>
  );
}

function Node({ title, place, plain, children }: { title: string; place: string; plain?: boolean; children: ReactNode }) {
  return (
    <article className={`absolute rounded-md bg-[#303030] text-[13px] text-[#dcdcdc] shadow-[0_4px_14px_3px_rgba(0,0,0,0.55)] outline outline-[#141414] ${place}`}>
      <h2 className={`flex h-[25px] items-center gap-2 rounded-t-md pl-[13px] ${plain ? "border-b border-[#141414] bg-[#1d1d1d]" : "bg-[#1f735d]"}`}>
        <Chevron className="h-2 w-3" />
        <span className="whitespace-nowrap">{title}</span>
      </h2>
      <div className="pt-1.5">{children}</div>
    </article>
  );
}

const links = [
  "M1330 937C1375 937 1391 1369 1436 1369",
  "M660 1294C849 1294 921 1066 1110 1066",
  "M660 1294C1075 1294 1300 1146 1649 1146",
  "M660 1294C727 1294 752 1390 819 1390",
  "M1000 1357C1165 1357 1253 1427 1436 1427",
  "M1617 1337C1634 1337 1634 1150 1649 1150",
  "M1830 1111C1924 1111 1961 1225 2055 1225",
];

function Links() {
  return (
    <svg className="absolute inset-0 h-full w-full" aria-hidden="true">
      <defs>
        <pattern id="dots" width="26" height="26" patternUnits="userSpaceOnUse">
          <rect x="9" y="11" width="4" height="4" fill="#232323" />
        </pattern>
        <pattern id="bigDots" width="130" height="130" patternUnits="userSpaceOnUse">
          <rect x="8" y="114" width="6" height="6" fill="#292929" />
        </pattern>
      </defs>
      <rect width="100%" height="100%" fill="url(#dots)" />
      <rect width="100%" height="100%" fill="url(#bigDots)" />
      <g fill="none" transform="translate(0 -871)">
        {links.map((d) => (
          <g key={d}>
            <path d={d} stroke="#191919" strokeWidth="7" />
            <path d={d} stroke="#0b8f70" strokeWidth="4" />
            <path d={d} stroke="#00d6a3" strokeWidth="3" />
          </g>
        ))}
      </g>
    </svg>
  );
}

function Crumb({ icon, label }: { icon: string; label: string }) {
  return (
    <a href="#" className="flex items-center gap-[18px]">
      <Icon name={icon} />
      {label}
    </a>
  );
}

function CrumbArrow() {
  return (
    <svg viewBox="0 0 11 18" aria-hidden="true" className="h-[18px] w-[11px]">
      <path d="M1 1L9 9L1 17" fill="none" stroke="#e6e6e6" strokeWidth="2" />
    </svg>
  );
}

function NodeEditor() {
  return (
    <section className="flex min-h-0 min-w-0 flex-col bg-[#1d1d1d]">
      <div className="grid h-[50px] shrink-0 grid-cols-[973fr_auto_1031fr] items-center bg-[#222222]">
        <div className="flex items-center gap-3">
          <IconMenu icon="geoNodes" label="Editor type" />
          <MenuItems items={["View", "Select", "Add", "Node"]} />
        </div>
        <div className="flex items-center">
          <div className={`flex h-10 overflow-hidden ${box}`}>
            <button aria-label="Browse node tree" className="flex w-[62px] items-center justify-between border-r-2 border-[#3d3d3d] pr-1.5 pl-2">
              <Icon name="nodeTree" />
              <Chevron />
            </button>
            <input aria-label="Node tree name" defaultValue="Geometry Nodes" className="w-[238px] bg-[#1d1d1d] pl-3.5 text-[#e6e6e6] outline-none" />
            {["shield", "duplicate", "close"].map((n) => (
              <button key={n} aria-label={n} className="grid w-10 place-items-center border-l-2 border-[#3d3d3d] bg-[#545454]">
                <Icon name={n} />
              </button>
            ))}
          </div>
          <button aria-label="Pin" className="ml-4">
            <Icon name="pin" />
          </button>
        </div>
        <div className="flex items-center justify-end gap-2.5 pr-[7px]">
          <button aria-label="Parent tree" className="grid h-10 w-10 place-items-center rounded-lg border-2 border-[#333333] bg-[#383838]">
            <Icon name="up" />
          </button>
          <div className={`flex h-10 overflow-hidden ${box}`}>
            <button aria-label="Snap" className="grid w-[38px] place-items-center border-r-2 border-[#3d3d3d] bg-[#545454]">
              <Icon name="magnet" />
            </button>
            <button aria-label="Snap to" className="flex w-[62px] items-center justify-between pr-1 pl-2">
              <Icon name="snapGrid" />
              <Chevron />
            </button>
          </div>
          <div className={`flex h-10 overflow-hidden ${box}`}>
            <button aria-label="Overlays" className="grid w-[38px] place-items-center border-r-2 border-[#3d3d3d] bg-[#4772b3]">
              <Icon name="overlay" />
            </button>
            <button aria-label="Overlay options" className="grid w-[38px] place-items-center">
              <Chevron />
            </button>
          </div>
        </div>
      </div>
      <div className="relative min-h-0 flex-1 overflow-hidden">
        <Links />
        <nav aria-label="Context path" className="relative flex h-[88px] items-center pl-[22px] text-[#e6e6e6]">
          <Crumb icon="object" label="Cube" />
          <span className="mr-5 ml-[33px]">
            <CrumbArrow />
          </span>
          <Crumb icon="geoNodes" label="GeometryNodes" />
          <span className="mr-5 ml-[35px]">
            <CrumbArrow />
          </span>
          <Crumb icon="nodeTree" label="Geometry Nodes" />
        </nav>
        <Node title="Group Input" plain place="top-[378px] left-[479px] w-[181px] pb-1.5">
          <Output label="Geometry" />
          <Output kind="virtual" />
        </Node>
        <Node title="Transform Geometry" place="top-[441px] left-[819px] w-[181px] pb-1.5">
          <Output label="Geometry" />
          <div className="pt-[5px]">
            <Input label="Geometry" />
            <VectorField label="Translation" kind="vector" values={["0 m", "0 m", "0 m"]} />
            <VectorField label="Rotation" kind="vector" values={["0°", "0°", "0°"]} />
            <VectorField label="Scale" kind="vector" values={["0.700", "0.700", "0.700"]} />
          </div>
        </Node>
        <Node title="Distribute Points on Faces" place="top-[21px] left-[1110px] w-[220px] pb-[7px]">
          <Output label="Points" />
          <Output label="Normal" kind="vectorField" />
          <Output label="Rotation" kind="vectorField" />
          <label className="mx-[13px] mt-[13px] mb-1.5 flex h-[26px] items-center rounded border-2 border-[#3d3d3d] bg-[#282828] pr-0.5 pl-[7px]">
            <span className="sr-only">Distribution method</span>
            <select className="min-w-0 flex-1 appearance-none bg-transparent outline-none">
              <option>Random</option>
            </select>
            <Chevron className="h-1.5 w-2.5" />
          </label>
          <Input label="Mesh" />
          <Input label="Selection" kind="boolOpen" />
          <Input kind="floatOpen">
            <NumberField label="Density" value="10.000" />
          </Input>
          <Input kind="int">
            <NumberField label="Seed" value="0" />
          </Input>
        </Node>
        <Node title="Join Geometry" place="top-[195px] left-[1649px] w-[181px] pb-1">
          <Output label="Geometry" />
          <div className="pt-[5px]">
            <Input label="Geometry" kind="multi" />
          </div>
        </Node>
        <Node title="Instance on Points" place="top-[421px] left-[1436px] w-[181px] pb-1.5">
          <Output label="Instances" />
          <div className="pt-[5px]">
            <Input label="Points" />
            <Input label="Selection" kind="boolOpen" />
            <Input label="Instance" />
            <Input kind="boolOpen">
              <label className="flex items-center gap-1">
                <input type="checkbox" className="h-[19px] w-[19px] appearance-none rounded border-2 border-[#3d3d3d] bg-[#545454]" />
                Pick Instance
              </label>
            </Input>
            <Input label="Instance Index" kind="intField" />
          </div>
          <div className="pt-0.5">
            <VectorField label="Rotation" kind="vectorFieldOpen" values={["0°", "0°", "0°"]} />
            <VectorField label="Scale" kind="vectorFieldOpen" values={["1.000", "1.000", "1.000"]} />
          </div>
        </Node>
        <Node title="Group Output" plain place="top-[309px] left-[2055px] w-[180px] pb-1.5">
          <Input label="Geometry" />
          <Input kind="virtual" />
        </Node>
        <button aria-label="Show sidebar" className="absolute top-[29px] right-0 grid h-7 w-2 place-items-end rounded-l bg-[#161616]">
          <svg viewBox="0 0 4 8" aria-hidden="true" className="my-auto h-2 w-1">
            <path d="M4 0V8L0 4Z" fill="#a0a0a0" />
          </svg>
        </button>
      </div>
    </section>
  );
}

export default function App() {
  return (
    <main className="grid h-screen grid-rows-[14px_793fr_915fr] gap-y-[7px] overflow-hidden bg-[#161616] font-['DejaVu_Sans',sans-serif] text-[21px] leading-none [text-shadow:0_2px_2px_rgba(0,0,0,0.35)]">
      <TopBar />
      <div className="grid min-h-0 grid-cols-[1016fr_1449fr] gap-x-[7px]">
        <Spreadsheet />
        <Viewport />
      </div>
      <NodeEditor />
    </main>
  );
}
